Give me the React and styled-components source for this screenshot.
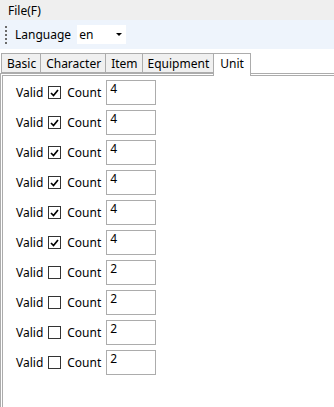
import styled, { createGlobalStyle } from 'styled-components'

const units = [
  { id: 1, valid: true, count: 4 },
  { id: 2, valid: true, count: 4 },
  { id: 3, valid: true, count: 4 },
  { id: 4, valid: true, count: 4 },
  { id: 5, valid: true, count: 4 },
  { id: 6, valid: true, count: 4 },
  { id: 7, valid: false, count: 2 },
  { id: 8, valid: false, count: 2 },
  { id: 9, valid: false, count: 2 },
  { id: 10, valid: false, count: 2 }
]

const tabs = ['Basic', 'Character', 'Item', 'Equipment', 'Unit']

const Global = createGlobalStyle`
  html, body { margin: 0; padding: 0; background: #fff; }
  body {
    font-family: "Noto Sans", "Open Sans", sans-serif;
    font-size: 12px;
    color: #000;
  }
`

const Window = styled.div`
  width: 334px;
  height: 407px;
  display: flex;
  flex-direction: column;
  overflow: hidden;
  background: #fff;
`

const MenuBar = styled.div`
  height: 20px;
  background: #efefef;
  display: flex;
  align-items: center;
  padding-left: 8px;
`

const ToolBar = styled.div`
  height: 29px;
  background: #eef4fc;
  display: flex;
  align-items: center;
  padding-left: 5px;
  gap: 8px;
`

const Grip = styled.div`
  width: 2px;
  height: 19px;
  background-image: radial-gradient(circle, #6b6b6b 0.8px, transparent 1px);
  background-size: 2px 4px;
`

const Combo = styled.div`
  width: 49px;
  height: 19px;
  background: #fff;
  display: flex;
  align-items: center;
  justify-content: space-between;
  padding: 0 4px 0 2px;
  box-sizing: border-box;
  margin-left: -2px;
`

const Arrow = styled.span`
  width: 0;
  height: 0;
  border-left: 3px solid transparent;
  border-right: 3px solid transparent;
  border-top: 3px solid #000;
`

const TabStrip = styled.div`
  margin-top: 2px;
  height: 22px;
  display: flex;
  align-items: flex-end;
  padding-left: 1px;
`

const Tab = styled.div`
  position: relative;
  z-index: ${p => (p.$active ? 2 : 1)};
  height: ${p => (p.$active ? '23px' : '20px')};
  margin-bottom: ${p => (p.$active ? '-3px' : '0')};
  padding: ${p => (p.$active ? '0 6px 3px' : '0 4px 0 5px')};
  margin-left: -1px;
  box-sizing: border-box;
  border: 1px solid #acacac;
  border-bottom: ${p => (p.$active ? 'none' : '1px solid #acacac')};
  background: ${p => (p.$active ? '#fff' : '#f0f0f0')};
  display: flex;
  align-items: center;
  &:first-child { margin-left: 0; }
`

const Panel = styled.div`
  flex: 1;
  border-top: 3px double #acacac;
  border-left: 3px double #acacac;
  padding: 4px 0 0 13px;
  display: flex;
  flex-direction: column;
  gap: 5px;
`

const Row = styled.div`
  height: 25px;
  display: flex;
  align-items: center;
`

const Label = styled.span`
  margin-right: ${p => p.$gap}px;
`

const Check = styled.span`
  width: 13px;
  height: 13px;
  box-sizing: border-box;
  border: 1px solid #333;
  background: #fff;
  display: flex;
  align-items: center;
  justify-content: center;
  margin-right: 6px;
`

const CountBox = styled.div`
  width: 50px;
  height: 25px;
  box-sizing: border-box;
  border: 1px solid #acacac;
  padding: 0 0 0 3px;
  line-height: 16px;
  margin-left: 5px;
`

function App() {
  return (
    <Window>
      <Global />
      <MenuBar>File(F)</MenuBar>
      <ToolBar>
        <Grip />
        <span>Language</span>
        <Combo>
          <span>en</span>
          <Arrow />
        </Combo>
      </ToolBar>
      <TabStrip>
        {tabs.map(t => (
          <Tab key={t} $active={t === 'Unit'}>{t}</Tab>
        ))}
      </TabStrip>
      <Panel>
        {units.map(u => (
          <Row key={u.id}>
            <Label $gap={5}>Valid</Label>
            <Check>
              {u.valid && (
                <svg width="9" height="8" viewBox="0 0 9 8">
                  <path d="M1 4 L3.5 6.5 L8 1" fill="none" stroke="#000" strokeWidth="1.7" />
                </svg>
              )}
            </Check>
            <Label $gap={0}>Count</Label>
            <CountBox>{u.count}</CountBox>
          </Row>
        ))}
      </Panel>
    </Window>
  )
}

export default App
